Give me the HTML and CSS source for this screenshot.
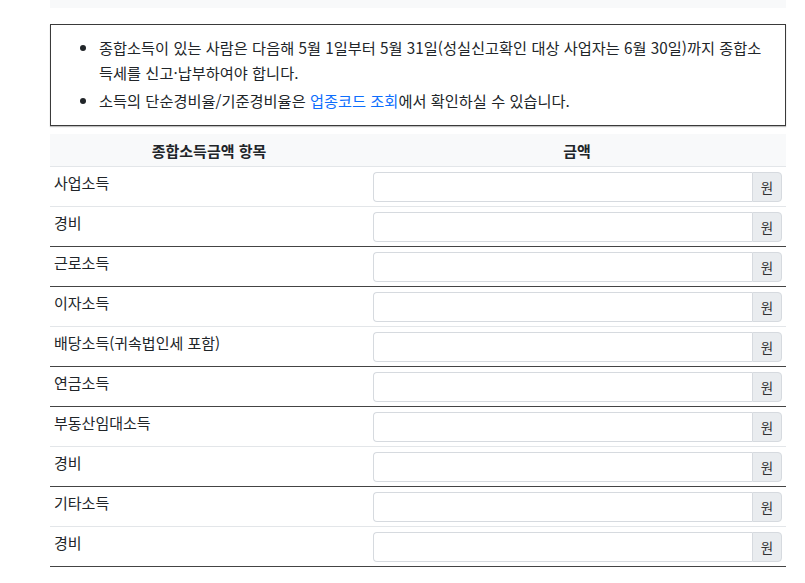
FILE: index.html
```html
<!DOCTYPE html>
<html lang="ko">
  <head>
    <meta charset="UTF-8" />
    <meta name="viewport" content="width=device-width, initial-scale=1.0" />
    <title>종합소득세 계산</title>
    <link rel="stylesheet" href="styles.css">
  </head>
  <body>
    <div class="wrap">
      <div class="top-strip"></div>

      <div class="notice">
        <ul>
          <li>
            종합소득이 있는 사람은 다음해 5월 1일부터 5월 31일(성실신고확인 대상 사업자는 6월 30일)까지 종합소득세를 신고·납부하여야 합니다.
          </li>
          <li>
            소득의 단순경비율/기준경비율은 <a href="#">업종코드 조회</a>에서 확인하실 수 있습니다.
          </li>
        </ul>
      </div>

      <table class="calc">
        <thead>
          <tr>
            <th class="col-name">종합소득금액 항목</th>
            <th>금액</th>
          </tr>
        </thead>
        <tbody>
          <tr>
            <td>사업소득</td>
            <td><div class="money"><input type="text" /><span>원</span></div></td>
          </tr>
          <tr class="end">
            <td>경비</td>
            <td><div class="money"><input type="text" /><span>원</span></div></td>
          </tr>
          <tr class="end">
            <td>근로소득</td>
            <td><div class="money"><input type="text" /><span>원</span></div></td>
          </tr>
          <tr>
            <td>이자소득</td>
            <td><div class="money"><input type="text" /><span>원</span></div></td>
          </tr>
          <tr class="end">
            <td>배당소득(귀속법인세 포함)</td>
            <td><div class="money"><input type="text" /><span>원</span></div></td>
          </tr>
          <tr class="end">
            <td>연금소득</td>
            <td><div class="money"><input type="text" /><span>원</span></div></td>
          </tr>
          <tr>
            <td>부동산임대소득</td>
            <td><div class="money"><input type="text" /><span>원</span></div></td>
          </tr>
          <tr class="end">
            <td>경비</td>
            <td><div class="money"><input type="text" /><span>원</span></div></td>
          </tr>
          <tr>
            <td>기타소득</td>
            <td><div class="money"><input type="text" /><span>원</span></div></td>
          </tr>
          <tr class="end">
            <td>경비</td>
            <td><div class="money"><input type="text" /><span>원</span></div></td>
          </tr>
        </tbody>
      </table>
    </div>
  </body>
</html>
```

FILE: styles.css
```css
body {
  margin: 0;
  padding: 0;
  background: #fff;
  font-family: "Noto Sans CJK KR", "Noto Sans", sans-serif;
  font-size: 15px;
  color: #212529;
}
.wrap {
  margin: 0 19px 0 50px;
}
.top-strip {
  height: 8px;
  background: #f8f9fa;
}
.notice {
  margin-top: 16px;
  border: 1px solid #3a3a3a;
  box-shadow: 0 1px 1px rgba(0, 0, 0, 0.25);
  padding: 10px 16px 12px;
  font-size: 15.25px;
}
.notice ul {
  margin: 0;
  padding-left: 32px;
}
.notice li {
  line-height: 25px;
  margin-bottom: 3px;
}
.notice li:last-child {
  margin-bottom: 0;
}
.notice a {
  color: #0d6efd;
  text-decoration: none;
}
table.calc {
  width: 100%;
  margin-top: 8px;
  border-collapse: collapse;
}
.calc th {
  background: #f8f9fa;
  font-weight: 700;
  text-align: center;
  height: 32px;
  padding: 0 4px;
  border-bottom: 1px solid #e3e6e9;
}
.calc th.col-name {
  width: 310px;
}
.calc td {
  vertical-align: top;
  padding: 5px 4px 4px 4px;
  line-height: 22px;
  border-bottom: 1px solid #e3e6e9;
}
.calc td + td {
  padding-left: 5px;
}
.calc tr.end td {
  border-bottom: 1px solid #444;
}
.money {
  display: flex;
  height: 30px;
}
.money input {
  flex: 1;
  min-width: 0;
  height: 30px;
  box-sizing: border-box;
  border: 1px solid #d6dadf;
  border-right: 0;
  border-radius: 4px 0 0 4px;
  padding: 0 8px;
  font: inherit;
}
.money span {
  width: 30px;
  box-sizing: border-box;
  display: flex;
  align-items: center;
  justify-content: center;
  background: #e9ecef;
  border: 1px solid #d6dadf;
  border-radius: 0 4px 4px 0;
  font-size: 13.5px;
  color: #333;
}
```
